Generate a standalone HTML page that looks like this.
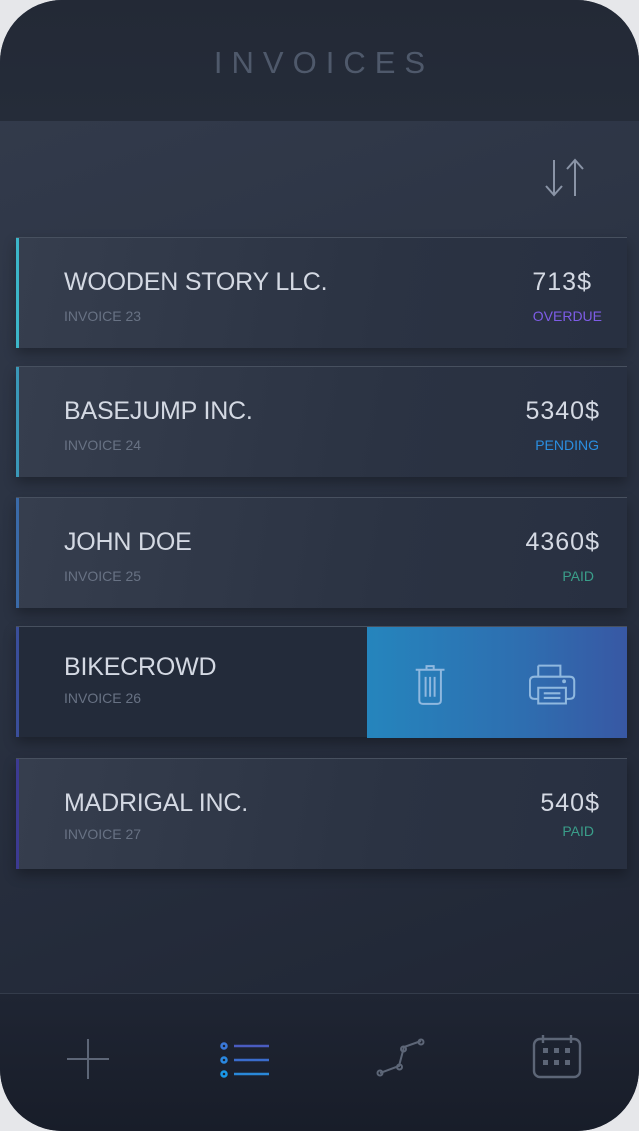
<!DOCTYPE html>
<html><head><style>
*{margin:0;padding:0;box-sizing:border-box}
body{width:639px;height:1131px;background:#e6e7ea;font-family:"Liberation Sans",sans-serif;overflow:hidden;position:relative}
.phone{position:absolute;left:0;top:0;width:639px;height:1131px;border-radius:62px;overflow:hidden;background:linear-gradient(160deg,#343c4d 0%,#2a3242 45%,#1e2432 100%)}
.hdr{position:absolute;left:0;top:0;width:639px;height:121px;background:linear-gradient(180deg,#232936,#252c39)}
.hdr h1{position:absolute;top:45px;width:100%;text-align:center;font-weight:normal;font-size:31px;letter-spacing:9px;color:#4f596b;padding-left:9px}
.card{position:absolute;left:16px;width:611px;height:111px;background:linear-gradient(100deg,#363e4e,#2b3343 60%,#283041);border-top:1px solid #47505f;box-shadow:0 6px 12px rgba(0,0,0,.3)}
.card .bar{position:absolute;left:0;top:0;bottom:0;width:3px}
.name{position:absolute;left:48px;top:30px;font-size:25px;color:#d4d9e3;letter-spacing:-0.2px}
.inv{position:absolute;left:48px;top:70px;font-size:14px;color:#687284}
.amt{position:absolute;right:27px;top:30px;font-size:25px;color:#d4d9e3;letter-spacing:1px}
.st{position:absolute;right:25px;top:70px;font-size:14px}
.nav{position:absolute;left:0;top:993px;width:639px;height:138px;background:linear-gradient(180deg,#1f2533,#181d29);border-top:1px solid #343c4b}
</style></head><body>
<div class="phone">
<div class="hdr"><h1>INVOICES</h1></div>
<svg style="position:absolute;left:540px;top:157px" width="50" height="42" viewBox="0 0 50 42"><g stroke="#8a94a6" stroke-width="2" fill="none"><path d="M14 3V38M6 29l8 9 8-9"/><path d="M35 39V3M27 12l8-9 8 9"/></g></svg>

<div class="card" style="top:237px"><div class="bar" style="background:#3cb6c9"></div><div class="name">WOODEN STORY LLC.</div><div class="inv">INVOICE 23</div><div class="amt" style="right:35px">713$</div><div class="st" style="color:#7d5ce6">OVERDUE</div></div>
<div class="card" style="top:366px"><div class="bar" style="background:#3a98b8"></div><div class="name">BASEJUMP INC.</div><div class="inv">INVOICE 24</div><div class="amt">5340$</div><div class="st" style="color:#2a8ee0;right:28px">PENDING</div></div>
<div class="card" style="top:497px"><div class="bar" style="background:#3a6aa8"></div><div class="name">JOHN DOE</div><div class="inv">INVOICE 25</div><div class="amt">4360$</div><div class="st" style="color:#3a9e8a;right:33px">PAID</div></div>
<div class="card" style="top:626px;background:#232b3a"><div class="bar" style="background:#3a4e9a"></div><div class="name" style="top:26px">BIKECROWD</div><div class="inv" style="top:63px">INVOICE 26</div>
<div style="position:absolute;left:351px;top:0;width:260px;height:111px;background:linear-gradient(90deg,#2585bd,#2e6eb0 60%,#3858a4)">
<svg style="position:absolute;left:46px;top:36px" width="36" height="44" viewBox="0 0 40 46"><g stroke="#8fb8df" stroke-width="2.2" fill="none"><path d="M3 6h32M15 6V2h8v4M7 6v34q0 4 4 4h16q4 0 4-4V6M14 14v22M19 14v22M24 14v22"/></g></svg>
<svg style="position:absolute;left:162px;top:37px" width="48" height="42" viewBox="0 0 52 44"><g stroke="#8fb8df" stroke-width="2.2" fill="none"><path d="M10 1h24v12M10 13V1M6 13h38q5 0 5 5v14q0 5-5 5h-4M10 37H6q-5 0-5-5V18q0-5 5-5M10 25h30v17H10zM16 31h18M16 36h18"/><circle cx="38" cy="18" r="1" fill="#8fb8df"/></g></svg>
</div></div>
<div class="card" style="top:758px"><div class="bar" style="background:#3c3a92"></div><div class="name" style="top:30px">MADRIGAL INC.</div><div class="inv" style="top:67px">INVOICE 27</div><div class="amt">540$</div><div class="st" style="color:#3a9e8a;top:64px;right:33px">PAID</div></div>

<div class="nav">
<svg style="position:absolute;left:66px;top:44px" width="44" height="42"><g stroke="#5d6677" stroke-width="2"><path d="M22 1v40M1 21h42"/></g></svg>
<svg style="position:absolute;left:218px;top:46px" width="54" height="40"><g stroke-width="2.5"><circle cx="6" cy="6" r="2.5" stroke="#3a78d8" fill="none"/><circle cx="6" cy="20" r="2.5" stroke="#2a88e0" fill="none"/><circle cx="6" cy="34" r="2.5" stroke="#1a98e8" fill="none"/><path d="M16 6h35" stroke="#4a5cc0"/><path d="M16 20h35" stroke="#3a6ccc"/><path d="M16 34h35" stroke="#2a88d8"/></g></svg>
<svg style="position:absolute;left:374px;top:44px" width="54" height="40"><g stroke="#5d6677" stroke-width="2" fill="none"><path d="M6 35l19-7 5-19 17-6"/><circle cx="6" cy="35" r="2.5"/><circle cx="25.5" cy="29" r="2.5"/><circle cx="29.5" cy="11" r="2.5"/><circle cx="47" cy="4" r="2.5"/></g></svg>
<svg style="position:absolute;left:532px;top:40px" width="52" height="46"><g stroke="#5d6677" stroke-width="2.4" fill="none"><rect x="2" y="5" width="46" height="38" rx="6"/><path d="M11 1v8M39 1v8"/></g><g fill="#5d6677"><rect x="11" y="14" width="5" height="5"/><rect x="22" y="14" width="5" height="5"/><rect x="33" y="14" width="5" height="5"/><rect x="11" y="26" width="5" height="5"/><rect x="22" y="26" width="5" height="5"/><rect x="33" y="26" width="5" height="5"/></g></svg>
</div>
</div>
</body></html>
